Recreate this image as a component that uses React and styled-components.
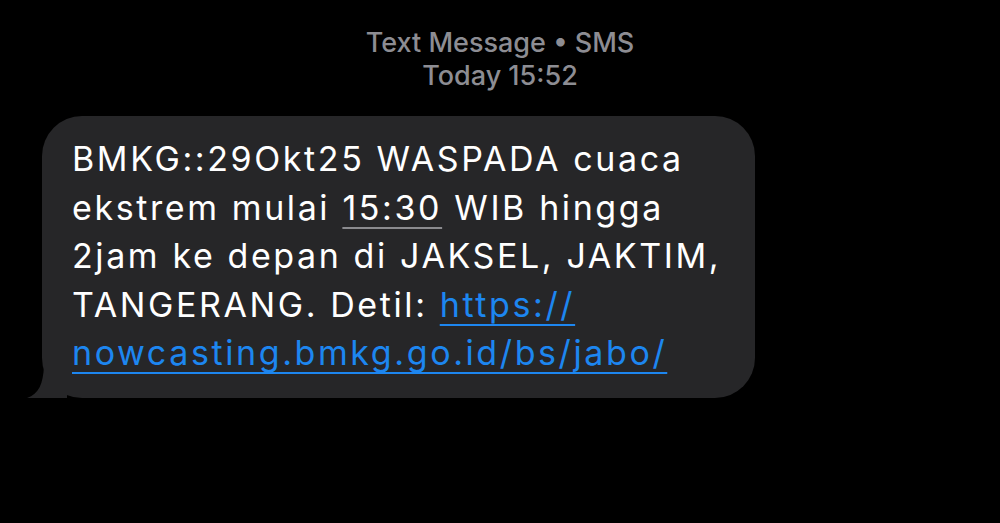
import React from 'react';
import styled, { createGlobalStyle } from 'styled-components';

const GlobalStyle = createGlobalStyle`
  html, body {
    margin: 0;
    padding: 0;
    background: #000;
  }
  body {
    font-family: Inter, "Noto Sans", "Liberation Sans", sans-serif;
    -webkit-font-smoothing: antialiased;
  }
`;

const Screen = styled.div`
  width: 1000px;
  height: 523px;
  background: #000;
  overflow: hidden;
  display: flex;
  flex-direction: column;
`;

const Header = styled.div`
  display: flex;
  flex-direction: column;
  align-items: center;
  padding-top: 26px;
  color: #8d8d93;
  font-size: 27px;
  line-height: 33px;
  font-weight: 500;
`;

const Row = styled.div`
  display: flex;
  padding: 24px 0 0 42px;
`;

const Bubble = styled.div`
  position: relative;
  width: 713px;
  box-sizing: border-box;
  padding: 19px 20px 20px 30px;
  background: #262628;
  border-radius: 40px;
  color: #fff;
  font-size: 34px;
  line-height: 48.5px;
  letter-spacing: 2.6px;
`;

const Tail = styled.svg`
  position: absolute;
  left: -15px;
  bottom: 0;
  width: 40px;
  height: 40px;
`;

const Detected = styled.span`
  text-decoration: underline;
  text-decoration-color: #8a8a8e;
  text-decoration-thickness: 2px;
  text-underline-offset: 7px;
`;

const Link = styled.a`
  color: #1d86f0;
  text-decoration: underline;
  text-decoration-thickness: 2px;
  text-underline-offset: 7px;
`;

const App = () => {
  return (
    <Screen>
      <GlobalStyle />
      <Header>
        <span>Text Message • SMS</span>
        <span>Today 15:52</span>
      </Header>
      <Row>
        <Bubble>
          <Tail viewBox="0 0 40 40">
            <path d="M40 0 L40 40 L0 40 C12 36 16 26 17 8 L17 0 Z" fill="#262628" />
          </Tail>
          BMKG::29Okt25 WASPADA cuaca
          <br />
          ekstrem mulai <Detected>15:30</Detected> WIB hingga
          <br />
          2jam ke depan di JAKSEL, JAKTIM,
          <br />
          TANGERANG. Detil: <Link href="#">https://</Link>
          <br />
          <Link href="#">nowcasting.bmkg.go.id/bs/jabo/</Link>
        </Bubble>
      </Row>
    </Screen>
  );
};

export default App;
